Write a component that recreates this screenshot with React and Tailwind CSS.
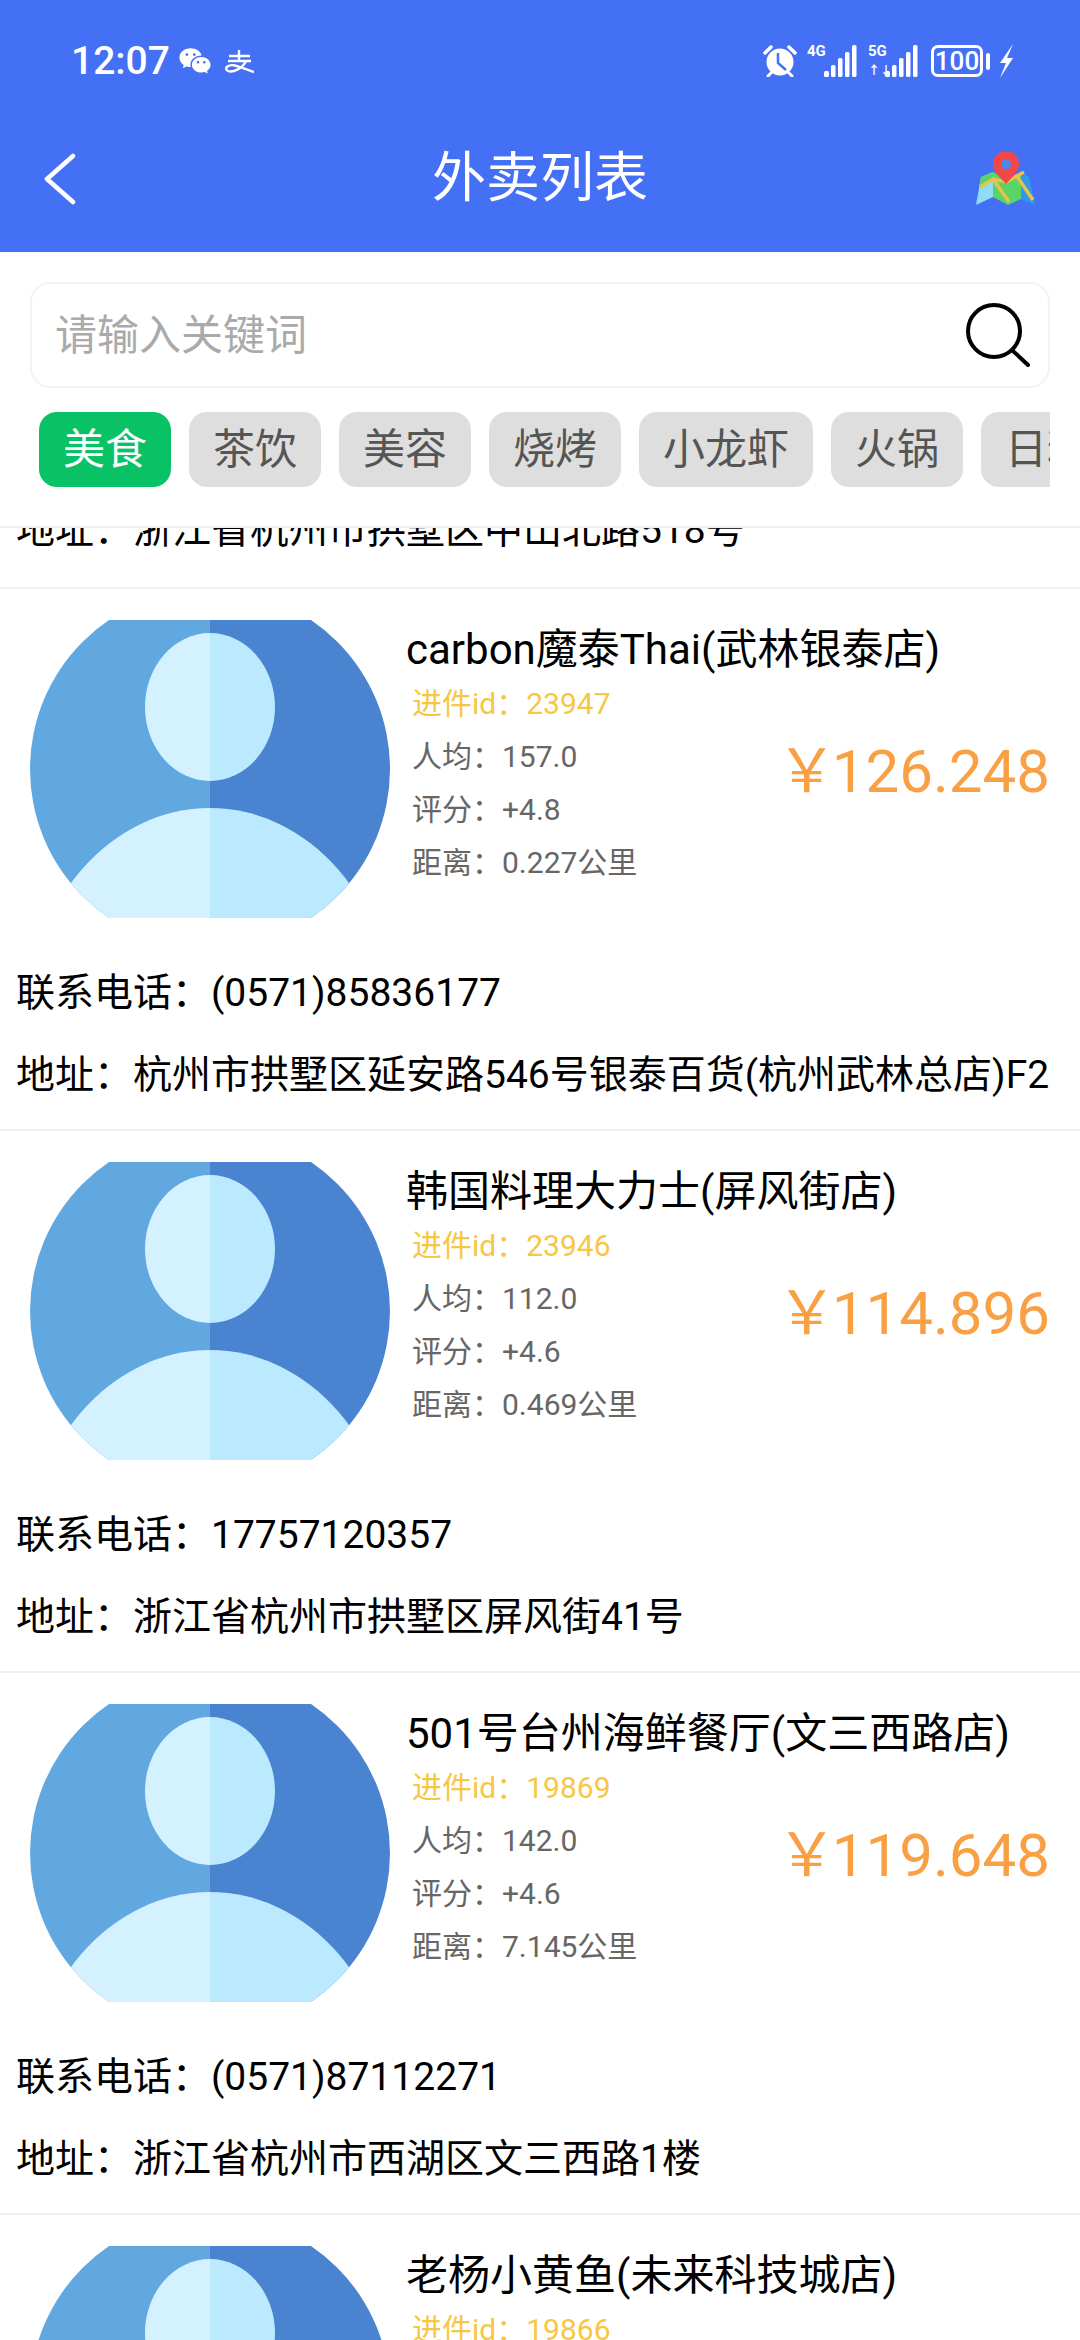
import React from 'react';
import { RiWechatFill } from 'react-icons/ri';

const tabs = ['美食', '茶饮', '美容', '烧烤', '小龙虾', '火锅', '日料'];

const shops = [
  { name: 'carbon魔泰Thai(武林银泰店)', id: '23947', avg: '157.0', score: '+4.8', dist: '0.227公里', price: '126.248', phone: '(0571)85836177', addr: '杭州市拱墅区延安路546号银泰百货(杭州武林总店)F2' },
  { name: '韩国料理大力士(屏风街店)', id: '23946', avg: '112.0', score: '+4.6', dist: '0.469公里', price: '114.896', phone: '17757120357', addr: '浙江省杭州市拱墅区屏风街41号' },
  { name: '501号台州海鲜餐厅(文三西路店)', id: '19869', avg: '142.0', score: '+4.6', dist: '7.145公里', price: '119.648', phone: '(0571)87112271', addr: '浙江省杭州市西湖区文三西路1楼' },
  { name: '老杨小黄鱼(未来科技城店)', id: '19866', avg: '138.0', score: '+4.7', dist: '7.302公里', price: '108.320', phone: '(0571)88730216', addr: '浙江省杭州市余杭区未来科技城' },
];

// signal bars, x offsets are inside a 33x32 box
const SignalBars = () => (
  <svg width="33" height="32" viewBox="0 0 33 32" fill="#fff">
    <rect x="0" y="26" width="5" height="6" rx="1.5" />
    <rect x="7" y="20" width="4.5" height="12" rx="1.5" />
    <rect x="14" y="13" width="4.5" height="19" rx="1.5" />
    <rect x="21" y="7" width="4.5" height="25" rx="1.5" />
    <rect x="28" y="0" width="4.5" height="32" rx="1.5" />
  </svg>
);

const AlarmIcon = () => (
  <svg width="34" height="32" viewBox="0 0 34 32">
    <circle cx="17" cy="17" r="13.5" fill="#fff" />
    <path d="M2 8 L8 2 M32 8 L26 2" stroke="#fff" strokeWidth="3.5" strokeLinecap="round" />
    <path d="M8 28 L5 31 M26 28 L29 31" stroke="#fff" strokeWidth="3" strokeLinecap="round" />
    <path d="M15 8 L15 18 L23 25" stroke="#4470f6" strokeWidth="2.5" fill="none" />
  </svg>
);

const AlipayIcon = () => (
  <svg width="30" height="24" viewBox="0 0 30 24" fill="none" stroke="#fff" strokeWidth="2.4">
    <path d="M5 6 H26 M15 0 V11 M4 11 H27" />
    <path d="M22 11 C19 18 9 23 4 21 C-1 18 5 14 11 15.5 C17 17 23 20 30 22" />
  </svg>
);

const MapIcon = () => (
  <svg width="60" height="54" viewBox="0 0 60 54">
    <path d="M0 53 L5 25 L17 20 L17 45 Z" fill="#8fdcf5" />
    <path d="M5 25 L17 20 L17 29 L3.5 35 Z" fill="#58d468" />
    <path d="M17 20 L30 27 L45 20 L45 47 L32 53 L17 45 Z" fill="#58d468" />
    <path d="M45 20 L53 25 L59 53 L45 47 Z" fill="#2f9be8" />
    <path d="M4 35 L17 27 L30 30 L48 20 M17 27 L33 50 M40 23 L57 48" stroke="#e8c24a" strokeWidth="3.5" fill="none" />
    <path d="M30 32 C25 26 17 20 17 12 A13 13 0 0 1 43 12 C43 20 35 26 30 32 Z" fill="#f0484a" />
    <circle cx="30" cy="12.5" r="5" fill="#4f86e8" />
  </svg>
);

const SearchIcon = () => (
  <svg width="64" height="64" viewBox="0 0 64 64" fill="none" stroke="#000" strokeWidth="4">
    <circle cx="28" cy="28" r="26" />
    <path d="M46 47 L62 62" strokeLinecap="round" />
  </svg>
);

// default avatar, a round picture cut off at top and bottom
const Avatar = ({ index }) => (
  <svg width="360" height="298" viewBox="0 0 360 298" className="shrink-0">
    <defs>
      <clipPath id={`avatar-${index}`}>
        <circle cx="180" cy="149" r="180" />
      </clipPath>
    </defs>
    <g clipPath={`url(#avatar-${index})`}>
      <rect x="0" y="0" width="180" height="298" fill="#62a8e0" />
      <rect x="180" y="0" width="180" height="298" fill="#4a83cf" />
      <path d="M180 13 A65 74 0 0 0 180 161 Z" fill="#d4f1ff" />
      <path d="M180 13 A65 74 0 0 1 180 161 Z" fill="#bbeaff" />
      <path d="M180 188 A182 212 0 0 0 -2 400 L180 400 Z" fill="#d4f1ff" />
      <path d="M180 188 A182 212 0 0 1 362 400 L180 400 Z" fill="#bbeaff" />
    </g>
  </svg>
);

const ShopRow = ({ shop, index }) => (
  <div className="h-[542px] border-b-2 border-[#f0f0f0] pt-[31px] shrink-0">
    <div className="flex pl-[30px] pr-[30px] h-[298px]">
      <Avatar index={index} />
      <div className="flex-1 ml-[16px] flex flex-col">
        <div className="pt-[2px] text-[42px] leading-[55px] text-black whitespace-nowrap">{shop.name}</div>
        <div className="flex items-center justify-between">
          <div className="pl-[6px] text-[30px] leading-[53px] text-[#666]">
            <div className="text-[#f7c744]">进件id：{shop.id}</div>
            <div>人均：{shop.avg}</div>
            <div>评分：{shop.score}</div>
            <div>距离：{shop.dist}</div>
          </div>
          <div className="flex items-center text-[60px] leading-none text-[#f9a044] mb-[22px]">
            <span className="-mr-[5px]">￥</span>
            <span>{shop.price}</span>
          </div>
        </div>
      </div>
    </div>
    <div className="mt-[36px] pl-[16px] text-[39px] leading-[79px] text-black whitespace-nowrap">
      <div>联系电话：{shop.phone}</div>
      <div className="mt-[3px]">地址：{shop.addr}</div>
    </div>
  </div>
);

export default function App() {
  return (
    <div className="w-[1080px] h-[2340px] overflow-hidden bg-white flex flex-col font-['Roboto','Noto_Sans_CJK_SC',sans-serif]">
      <div className="bg-[#4470f6] h-[252px] shrink-0 flex flex-col">
        <div className="h-[122px] flex items-center pl-[71px] pr-[66px] text-white">
          <span className="text-[39px] font-medium">12:07</span>
          <RiWechatFill className="ml-[8px] text-[34px]" />
          <span className="ml-[12px] mt-[2px]"><AlipayIcon /></span>
          <div className="ml-auto flex items-center">
            <AlarmIcon />
            <div className="ml-[10px] relative w-[50px] h-[32px]">
              <span className="absolute left-0 -top-[3px] text-[15px] font-bold leading-[18px]">4G</span>
              <span className="absolute right-0 top-0"><SignalBars /></span>
            </div>
            <div className="ml-[11px] relative w-[50px] h-[32px]">
              <span className="absolute left-0 -top-[3px] text-[15px] font-bold leading-[18px]">5G</span>
              <span className="absolute left-0 bottom-0 text-[12px] font-bold leading-[12px]">↑↓</span>
              <span className="absolute right-0 top-0"><SignalBars /></span>
            </div>
            <div className="ml-[13px] w-[52px] h-[32px] border-[3px] border-white rounded-[7px] flex items-center justify-center text-[26px] font-medium leading-none">100</div>
            <div className="ml-[3px] w-[4px] h-[17px] bg-white rounded-[2px]" />
            <svg className="ml-[9px]" width="15" height="34" viewBox="0 0 15 34" fill="#fff">
              <path d="M14 0 L1 19 L7 19 L1 34 L14 14 L8 14 Z" />
            </svg>
          </div>
        </div>
        <div className="flex-1 flex items-center justify-between pl-[44px] pr-[44px] pb-[16px] relative">
          <svg width="32" height="52" viewBox="0 0 32 52" fill="none" stroke="#fff" strokeWidth="4.5" strokeLinecap="round" strokeLinejoin="round">
            <path d="M29 3 L3 26 L29 49" />
          </svg>
          <span className="absolute left-0 right-0 text-center text-[54px] leading-none text-white">外卖列表</span>
          <MapIcon />
        </div>
      </div>

      <div className="px-[30px] pt-[30px] shrink-0">
        <div className="h-[106px] border-2 border-[#f3f3f3] rounded-[20px] flex items-center pl-[23px] pr-[18px]">
          <input
            className="flex-1 outline-none text-[42px] placeholder:text-[#aaa] bg-transparent"
            placeholder="请输入关键词"
            readOnly
          />
          <SearchIcon />
        </div>
        <div className="mt-[24px] flex gap-[18px] overflow-hidden pl-[9px] h-[75px]">
          {tabs.map((tab, i) => (
            <div
              key={tab}
              className={`shrink-0 h-[75px] px-[24px] rounded-[18px] flex items-center text-[42px] ${i === 0 ? 'bg-[#0ac266] text-white' : 'bg-[#dedede] text-[#555]'}`}
            >
              {tab}
            </div>
          ))}
        </div>
      </div>

      <div className="mt-[39px] flex-1 overflow-hidden border-t-2 border-[#f0f0f0] flex flex-col">
        <div className="h-[61px] shrink-0 border-b-2 border-[#f0f0f0] overflow-hidden pl-[16px] text-[39px] leading-[79px] text-black">
          <div className="-mt-[37px]">地址：浙江省杭州市拱墅区中山北路518号</div>
        </div>
        {shops.map((shop, i) => (
          <ShopRow key={shop.id} shop={shop} index={i} />
        ))}
      </div>
    </div>
  );
}
